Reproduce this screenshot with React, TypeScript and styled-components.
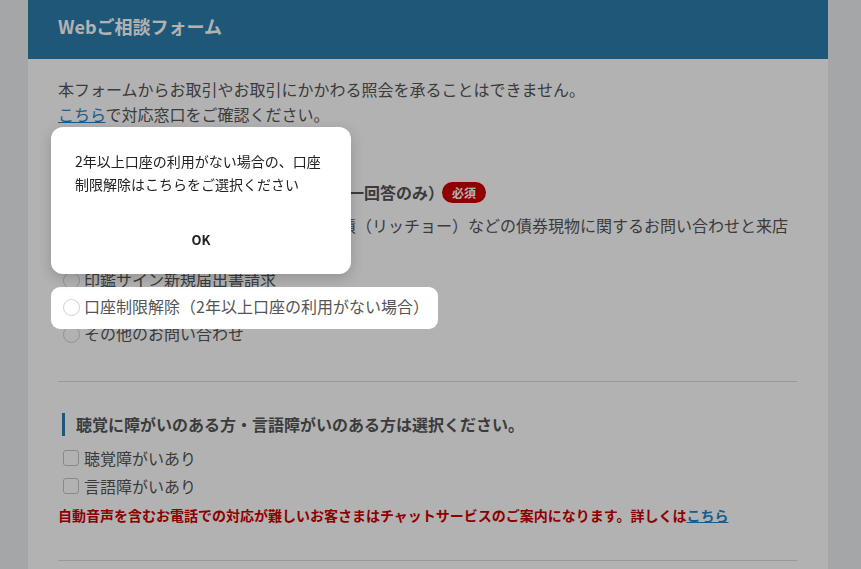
import React from "react";
import styled, { createGlobalStyle } from "styled-components";

const GlobalStyle = createGlobalStyle`
  html, body {
    margin: 0;
    padding: 0;
    background: #edeef1;
    overflow: hidden;
    font-family: "Noto Sans CJK JP", "Noto Sans", sans-serif;
  }
`;

const Panel = styled.div`
  width: 800px;
  margin-left: 28px;
  background: #ffffff;
  min-height: 620px;
`;

const Header = styled.header`
  height: 59px;
  background: #2c7dad;
  display: flex;
  align-items: center;
  padding: 0 30px 7px;
  box-sizing: border-box;
`;

const HeaderTitle = styled.h1`
  margin: 0;
  color: #ffffff;
  font-size: 18px;
  font-weight: 700;
  letter-spacing: 0;
`;

const Content = styled.div`
  padding: 18px 31px 0 30px;
  color: #555555;
  font-size: 16px;
`;

const Intro = styled.p`
  margin: 0;
  line-height: 25px;
`;

const Link = styled.a`
  color: #2585c9;
  text-decoration: underline;
`;

const Section = styled.section<{ $top: number }>`
  margin-top: ${(p) => p.$top}px;
`;

const SectionTitle = styled.h2`
  margin: 0 0 0 4px;
  border-left: 3px solid #2c7dad;
  padding-left: 11px;
  font-size: 16px;
  font-weight: 700;
  line-height: 23px;
  color: #555555;
  display: flex;
  align-items: center;
`;

const Badge = styled.span`
  display: inline-flex;
  align-items: center;
  justify-content: center;
  margin-left: -2px;
  width: 44px;
  height: 21px;
  border-radius: 11px;
  background: #cc0000;
  color: #ffffff;
  font-size: 12px;
  font-weight: 700;
`;

const OptionList = styled.div<{ $gap: number }>`
  margin-top: ${(p) => p.$gap}px;
  display: flex;
  flex-direction: column;
  align-items: flex-start;
`;

const OptionRow = styled.label<{ $lh: number; $highlight?: boolean }>`
  display: flex;
  align-items: flex-start;
  line-height: ${(p) => p.$lh}px;
  color: #555555;
  position: ${(p) => (p.$highlight ? "relative" : "static")};
  z-index: ${(p) => (p.$highlight ? 1001 : "auto")};
  &::before {
    content: "";
    display: ${(p) => (p.$highlight ? "block" : "none")};
    position: absolute;
    top: -6px;
    bottom: -9px;
    left: -7px;
    right: -9px;
    background: #ffffff;
    border-radius: 9px;
    z-index: -1;
  }
`;

const Radio = styled.span`
  flex: none;
  width: 15px;
  height: 15px;
  margin: 6px 4px 0 5px;
  border: 1px solid #cfcfcf;
  border-radius: 50%;
  background: #ffffff;
`;

const Checkbox = styled.span`
  flex: none;
  width: 14px;
  height: 14px;
  margin: 6px 5px 0 5px;
  border: 1px solid #c4c4c4;
  border-radius: 3px;
  background: #ffffff;
`;

const Divider = styled.hr<{ $top: number }>`
  margin: ${(p) => p.$top}px 0 0;
  border: none;
  border-top: 1px solid #dcdcdc;
`;

const Note = styled.p`
  margin: 4px 0 0;
  font-size: 14px;
  line-height: 22px;
  font-weight: 700;
  color: #cc0000;
`;

const Overlay = styled.div`
  position: fixed;
  inset: 0;
  background: rgba(0, 0, 0, 0.3);
  z-index: 1000;
`;

const Modal = styled.div`
  position: fixed;
  left: 51px;
  top: 127px;
  width: 300px;
  box-sizing: border-box;
  padding: 23px 24px 14px;
  background: #ffffff;
  border-radius: 12px;
  box-shadow: 0 4px 14px rgba(0, 0, 0, 0.18);
  z-index: 1002;
`;

const ModalText = styled.p`
  margin: 0;
  font-size: 14px;
  line-height: 23px;
  color: #222222;
`;

const ModalButton = styled.button`
  display: block;
  width: 100%;
  height: 42px;
  margin-top: 22px;
  border: none;
  background: transparent;
  font-family: "Noto Sans CJK JP", "Noto Sans", sans-serif;
  font-size: 13px;
  font-weight: 700;
  color: #222222;
  cursor: pointer;
`;

const options = [
  "当行が発行の割引金融債・利付金融債（リッチョー）などの債券現物に関するお問い合わせと来店予約",
  "印鑑サイン新規届出書請求",
  "口座制限解除（2年以上口座の利用がない場合）",
  "その他のお問い合わせ",
];

export default function App() {
  return (
    <>
      <GlobalStyle />
      <Panel>
        <Header>
          <HeaderTitle>Webご相談フォーム</HeaderTitle>
        </Header>
        <Content>
          <Intro>
            本フォームからお取引やお取引にかかわる照会を承ることはできません。
            <br />
            <Link href="#">こちら</Link>で対応窓口をご確認ください。
          </Intro>

          <Section $top={54}>
            <SectionTitle>
              お問い合わせ内容をお選びください（一回答のみ）
              <Badge>必須</Badge>
            </SectionTitle>
            <OptionList $gap={8}>
              {options.map((o, i) => (
                <OptionRow key={o} $lh={27} $highlight={i === 2}>
                  <Radio />
                  <span>{o}</span>
                </OptionRow>
              ))}
            </OptionList>
          </Section>

          <Divider $top={34} />

          <Section $top={31}>
            <SectionTitle>
              聴覚に障がいのある方・言語障がいのある方は選択ください。
            </SectionTitle>
            <OptionList $gap={8}>
              <OptionRow $lh={28}>
                <Checkbox />
                <span>聴覚障がいあり</span>
              </OptionRow>
              <OptionRow $lh={28}>
                <Checkbox />
                <span>言語障がいあり</span>
              </OptionRow>
            </OptionList>
            <Note>
              自動音声を含むお電話での対応が難しいお客さまはチャットサービスのご案内になります。詳しくは
              <Link href="#">こちら</Link>
            </Note>
          </Section>

          <Divider $top={34} />
        </Content>
      </Panel>
      <Overlay />
      <Modal>
        <ModalText>
          2年以上口座の利用がない場合の、口座制限解除はこちらをご選択ください
        </ModalText>
        <ModalButton>OK</ModalButton>
      </Modal>
    </>
  );
}
